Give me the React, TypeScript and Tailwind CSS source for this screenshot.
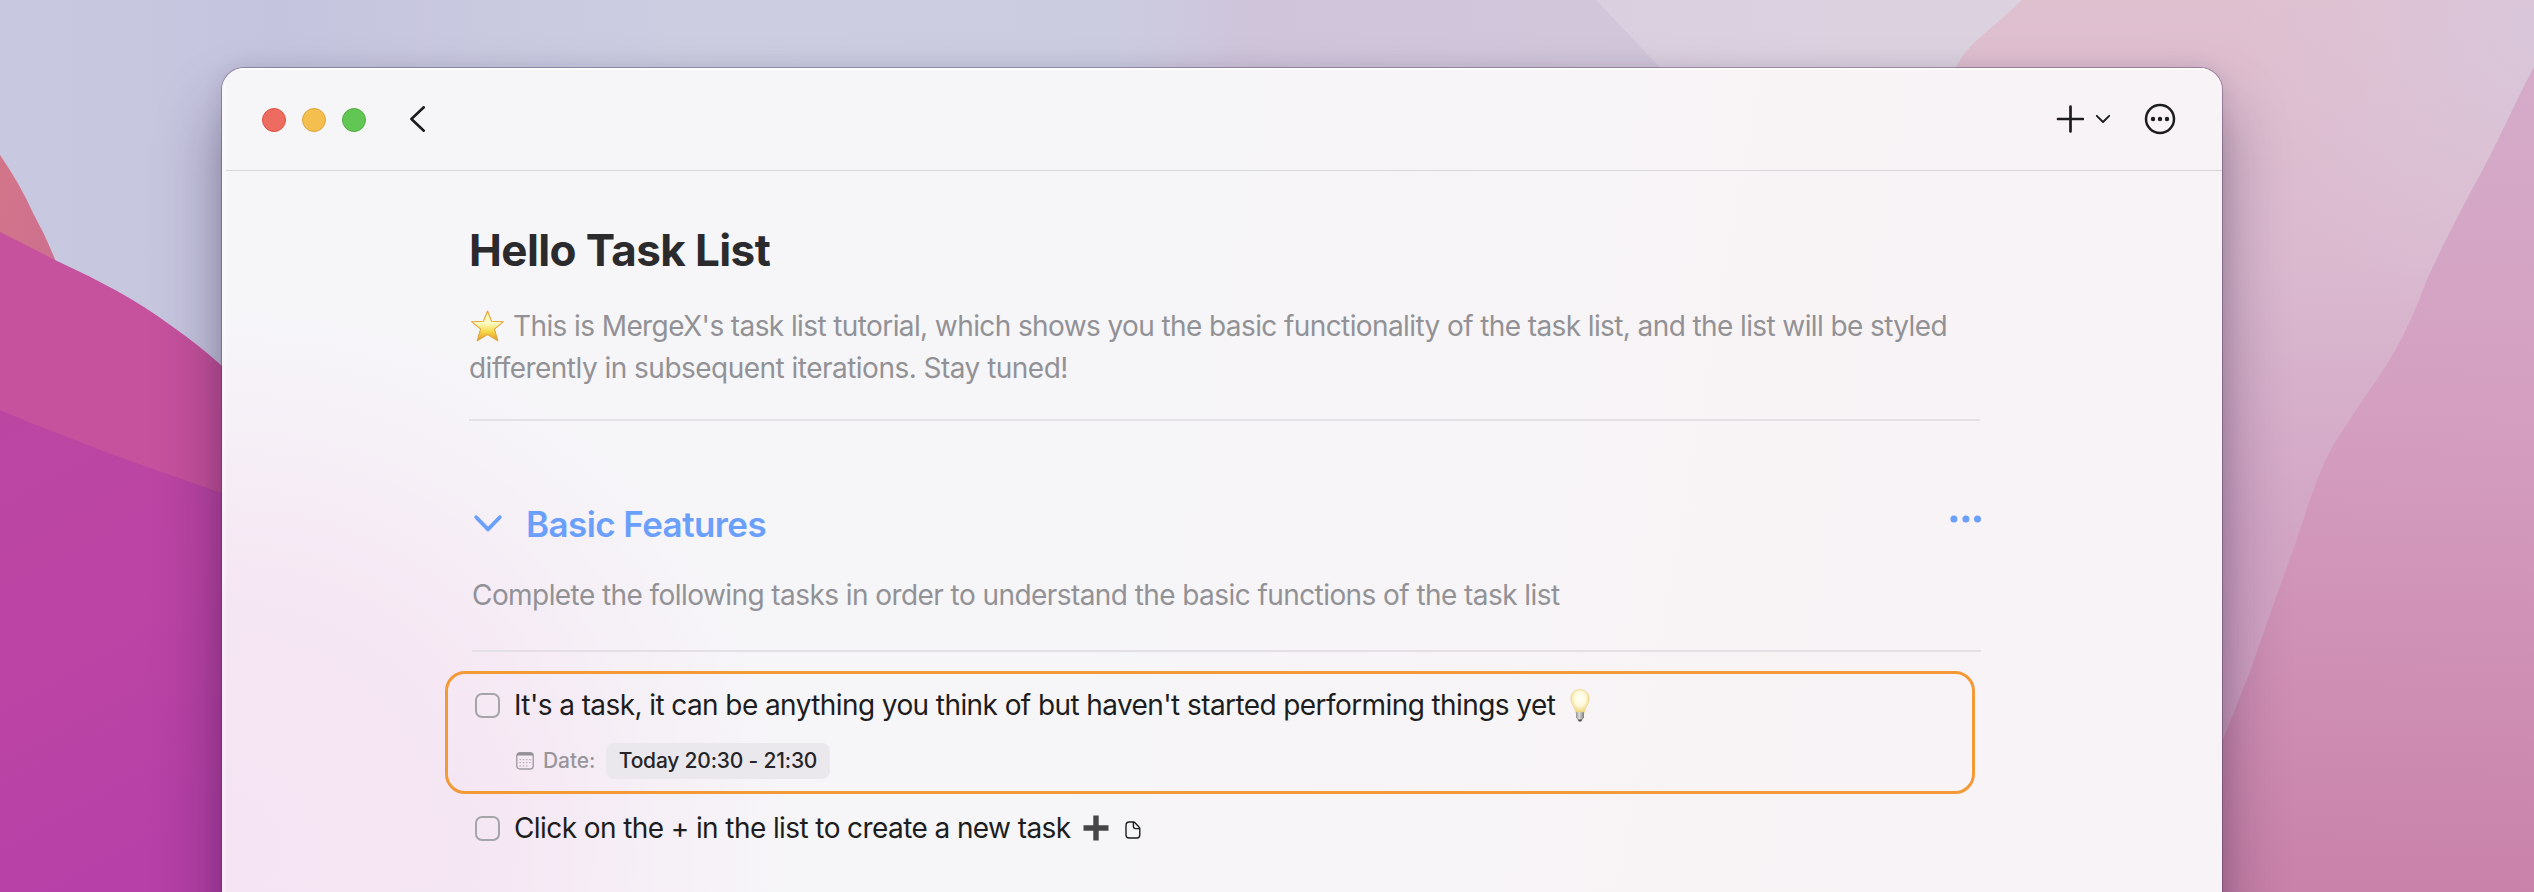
import React from "react";

function Wallpaper() {
  return (
    <svg className="absolute inset-0 h-full w-full" viewBox="0 0 2534 892" preserveAspectRatio="none" aria-hidden="true">
      <defs>
        <linearGradient id="sky" gradientUnits="userSpaceOnUse" x1="0" y1="0" x2="1960" y2="0">
          <stop offset="0" stopColor="#c8c9e1" />
          <stop offset="0.14" stopColor="#c5c4de" />
          <stop offset="0.35" stopColor="#cccde1" />
          <stop offset="0.57" stopColor="#cccce1" />
          <stop offset="0.64" stopColor="#cfc4da" />
          <stop offset="1" stopColor="#d4c8da" />
        </linearGradient>
        <linearGradient id="haze" gradientUnits="userSpaceOnUse" x1="1600" y1="0" x2="1960" y2="0">
          <stop offset="0" stopColor="#dacfdf" />
          <stop offset="1" stopColor="#dcd2df" />
        </linearGradient>
        <linearGradient id="rose" x1="0" y1="0" x2="0" y2="1">
          <stop offset="0" stopColor="#dfc0cf" />
          <stop offset="0.3" stopColor="#dab9cf" />
          <stop offset="0.6" stopColor="#d2a5c5" />
          <stop offset="1" stopColor="#cf9bbd" />
        </linearGradient>
        <radialGradient id="corner" gradientUnits="userSpaceOnUse" cx="2534" cy="30" r="300">
          <stop offset="0" stopColor="#d9c6da" />
          <stop offset="1" stopColor="#dcc6d8" stopOpacity="0" />
        </radialGradient>
        <linearGradient id="hill" gradientUnits="userSpaceOnUse" x1="2420" y1="80" x2="2400" y2="892">
          <stop offset="0" stopColor="#d5abc9" />
          <stop offset="0.4" stopColor="#d49fc1" />
          <stop offset="0.75" stopColor="#ce8eb3" />
          <stop offset="1" stopColor="#c982a9" />
        </linearGradient>
        <linearGradient id="coral" x1="0" y1="0" x2="1" y2="1">
          <stop offset="0" stopColor="#d37589" />
          <stop offset="1" stopColor="#cc6f90" />
        </linearGradient>
        <linearGradient id="purple" x1="0" y1="0" x2="0.3" y2="1">
          <stop offset="0" stopColor="#bb46a2" />
          <stop offset="0.5" stopColor="#bb44a4" />
          <stop offset="1" stopColor="#b640a7" />
        </linearGradient>
      </defs>
      <rect width="2534" height="892" fill="url(#sky)" />
      <path d="M1596 0L1672 80H2100V0Z" fill="url(#haze)" />
      <path d="M2022 0C2008 14 1990 28 1977 40Q1964 52 1954 70V892H2534V0Z" fill="url(#rose)" />
      <rect x="2220" y="0" width="314" height="400" fill="url(#corner)" />
      <path d="M2534 67C2514 104 2500 138 2482 171C2464 204 2440 250 2426 282Q2412 320 2397 347C2384 372 2364 396 2349 421Q2334 442 2325 461Q2312 492 2304 518Q2290 560 2276 597Q2262 638 2248 677L2222 742V892H2534Z" fill="url(#hill)" />
      <path d="M0 155Q20 184 33 213Q46 236 56 262V300H0Z" fill="url(#coral)" />
      <path d="M0 232Q30 247 57 261Q88 275 117 291Q146 307 173 327Q200 346 222 366L260 420V892H0Z" fill="#c6519c" />
      <path d="M0 410Q32 424 67 437Q110 454 153 469Q190 482 222 493L260 503V892H0Z" fill="url(#purple)" />
    </svg>
  );
}

function Star() {
  return (
    <svg className="h-[32px] w-[33px] shrink-0" viewBox="0 0 33 32">
      <defs>
        <linearGradient id="star" x1="0" y1="0" x2="0" y2="1">
          <stop offset="0" stopColor="#fbeea0" />
          <stop offset="0.4" stopColor="#fffcc8" />
          <stop offset="0.68" stopColor="#f8dc4c" />
          <stop offset="1" stopColor="#e39426" />
        </linearGradient>
      </defs>
      <path d="M16.5 1L20.6 11.2L32.4 11.7L23.4 19.2L26.9 30.8L16.5 24.6L6.1 30.8L9.6 19.2L.6 11.7L12.4 11.2Z" fill="url(#star)" stroke="#e0a63e" strokeWidth="1.1" strokeLinejoin="round" />
    </svg>
  );
}

function Bulb() {
  return (
    <svg className="h-[33px] w-[20px] shrink-0" viewBox="0 0 20 33">
      <defs>
        <radialGradient id="glow" cx="0.5" cy="0.4" r="0.6">
          <stop offset="0" stopColor="#fffffb" />
          <stop offset="0.5" stopColor="#fffbdc" />
          <stop offset="1" stopColor="#efd27c" />
        </radialGradient>
        <linearGradient id="base" x1="0" y1="0" x2="1" y2="0">
          <stop offset="0" stopColor="#8d8d8b" />
          <stop offset="0.4" stopColor="#dddddb" />
          <stop offset="1" stopColor="#7b7b79" />
        </linearGradient>
      </defs>
      <path d="M10 .6C4.6 .6.9 4.6.9 9.8C.9 14.8 5 18 5.7 23.4H14.3C15 18 19.1 14.8 19.1 9.8C19.1 4.6 15.4.6 10 .6Z" fill="url(#glow)" stroke="#ecd591" strokeWidth=".8" />
      <path d="M6 23.2H14V28.4L12.2 31H7.8L6 28.4Z" fill="url(#base)" />
      <path d="M7.8 30.6H12.2L11.2 32.6H8.8Z" fill="#4a4a4a" />
    </svg>
  );
}

function Checkbox() {
  return <span className="h-[25px] w-[25px] shrink-0 rounded-[7px] border-2 border-[#a3a5a9]" />;
}

export default function App() {
  return (
    <div className="relative h-[892px] w-full overflow-hidden pl-[222px] pt-[68px] font-['Inter','Liberation_Sans',sans-serif]">
      <Wallpaper />
      <main className="relative h-[900px] w-[2000px] overflow-hidden rounded-[22px] bg-[radial-gradient(ellipse_560px_540px_at_0px_780px,#f5e5f4_0%,#f5e6f3_45%,rgba(246,232,242,0)_100%),linear-gradient(100deg,#f6f6f9_0%,#f6f5f8_45%,#f8f4f6_75%,#f8f3f6_100%)] shadow-[0_0_0_1px_rgba(70,50,90,0.38),0_40px_64px_rgba(30,15,50,0.4),0_0_20px_rgba(40,30,60,0.10)]">
        <div className="absolute inset-y-0 left-0 w-[4px] bg-white/30" />
        <div className="absolute inset-x-[12px] top-0 h-[2px] bg-white/80" />
        <header className="ml-[4px] flex h-[103px] items-center border-b border-[#d6d5d9] pl-[36px] pr-[46px]">
          <div className="flex gap-4 pt-[2px]">
            <span className="h-6 w-6 rounded-full border border-[#dc5349] bg-[#ed6b5f]" />
            <span className="h-6 w-6 rounded-full border border-[#dba53b] bg-[#f5bf4f]" />
            <span className="h-6 w-6 rounded-full border border-[#52ae3f] bg-[#62c655]" />
          </div>
          <svg className="ml-[42px] h-[28px] w-[18px]" viewBox="0 0 18 28" fill="none" stroke="#1d1d20" strokeWidth="2.6" strokeLinecap="round" strokeLinejoin="round">
            <path d="M15.8 2.3L3.4 14L15.8 25.7" />
          </svg>
          <div className="ml-auto flex items-center">
            <svg className="h-[28px] w-[28px]" viewBox="0 0 28 28" fill="none" stroke="#1d1d20" strokeWidth="2.7" strokeLinecap="round">
              <path d="M14.5 1.6V26.4M2 14H27" />
            </svg>
            <svg className="ml-[11px] h-[10px] w-[16px]" viewBox="0 0 16 10" fill="none" stroke="#1d1d20" strokeWidth="1.9" strokeLinecap="round" strokeLinejoin="round">
              <path d="M1.8 1.8L8 8L14.2 1.8" />
            </svg>
            <svg className="ml-[33px] h-[32px] w-[32px]" viewBox="0 0 32 32">
              <circle cx="16" cy="16" r="14" fill="none" stroke="#1d1d20" strokeWidth="2.5" />
              <circle cx="9" cy="16" r="2.2" fill="#1d1d20" />
              <circle cx="16" cy="16" r="2.2" fill="#1d1d20" />
              <circle cx="23" cy="16" r="2.2" fill="#1d1d20" />
            </svg>
          </div>
        </header>

        <div className="pl-[247px]">
          <h1 className="mt-[49px] text-[44px] font-bold leading-[60px] tracking-[-0.6px] text-[#2b2b2e]">Hello Task List</h1>
          <div className="mt-[25px] w-[1511px] border-b-2 border-[#e3e1e5] pb-[30px] text-[28px] leading-[42px] text-[#929296]">
            <p className="flex items-center whitespace-nowrap pl-[2px]">
              <Star />
              <span className="ml-[9px] tracking-[-0.6px]">This is MergeX's task list tutorial, which shows you the basic functionality of the task list, and the list will be styled</span>
            </p>
            <p className="whitespace-nowrap tracking-[-0.52px]">differently in subsequent iterations. Stay tuned!</p>
          </div>

          <section className="ml-[3px] w-[1509px]">
            <div className="mt-[79px] flex h-[48px] items-center text-[#6b9ffc]">
              <svg className="h-[20px] w-[32px]" viewBox="0 0 32 20" fill="none" stroke="currentColor" strokeWidth="3.8" strokeLinecap="round" strokeLinejoin="round">
                <path d="M4.2 3.2L16 15.4L27.8 3.2" />
              </svg>
              <h2 className="ml-[22px] text-[35px] font-semibold leading-[48px] tracking-[-0.58px]">Basic Features</h2>
              <svg className="mb-[11px] ml-auto h-[8px] w-[32px]" viewBox="0 0 32 8" fill="currentColor">
                <circle cx="4.9" cy="4" r="3.5" />
                <circle cx="16.9" cy="4" r="3.5" />
                <circle cx="28.5" cy="4" r="3.5" />
              </svg>
            </div>
            <p className="border-b-2 border-[#e3dfe5] pb-[34px] pt-[26px] text-[28px] leading-[42px] tracking-[-0.57px] text-[#929296]">Complete the following tasks in order to understand the basic functions of the task list</p>
          </section>

          <section className="ml-[-24px] mt-[19px] h-[123px] w-[1530px] rounded-[20px] border-[3px] border-[#f29a38] pl-[27px]">
            <div className="mt-[15px] flex h-[32px] items-center">
              <Checkbox />
              <p className="ml-[14px] whitespace-nowrap text-[28px] leading-[32px] tracking-[-0.585px] text-[#1d1d20]">It's a task, it can be anything you think of but haven't started performing things yet</p>
              <div className="ml-[15px]"><Bulb /></div>
            </div>
            <div className="mt-[22px] flex h-[36px] items-center">
              <svg className="ml-[41px] h-[18px] w-[18px]" viewBox="0 0 18 18">
                <rect x=".8" y=".8" width="16.4" height="16.2" rx="3" fill="none" stroke="#a09da2" strokeWidth="1.4" />
                <path d="M.8 3.5Q.8.8 3.6.8H14.4Q17.2.8 17.2 3.5Z" fill="#929094" />
                <path d="M3.5 7.6H15M3.5 10.7H15M3.5 13.8H12" stroke="#b5b0b6" strokeWidth="1.3" strokeDasharray="1.5 1.7" />
              </svg>
              <span className="ml-[9px] w-[54px] whitespace-nowrap text-[21px] font-medium tracking-[-0.1px] text-[#98969b]">Date:</span>
              <span className="ml-[9px] flex h-[36px] w-[224px] items-center justify-center whitespace-nowrap rounded-[8px] bg-[#ebe8ed] text-[21px] font-medium tracking-[-0.2px] text-[#252528]">Today 20:30 - 21:30</span>
            </div>
          </section>

          <div className="ml-[6px] mt-[18px] flex h-[32px] items-center">
            <Checkbox />
            <p className="ml-[14px] whitespace-nowrap text-[28px] leading-[32px] tracking-[-0.59px] text-[#1d1d20]">Click on the + in the list to create a new task</p>
            <svg className="ml-[13px] h-[26px] w-[26px]" viewBox="0 0 26 26">
              <path d="M10.3 .5H15.7V10.3H25.5V15.7H15.7V25.5H10.3V15.7H.5V10.3H10.3Z" fill="#464648" />
            </svg>
            <svg className="ml-[16px] mt-[4px] h-[18px] w-[16px]" viewBox="0 0 16 18" fill="none" stroke="#1d1d20" strokeWidth="1.4" strokeLinejoin="round">
              <path d="M4.2 1H8.4Q9.2 1 9.8 1.6L14.2 6.2Q14.8 6.8 14.8 7.6V13.8Q14.8 17 11.8 17H4.2Q1 17 1 13.8V4.2Q1 1 4.2 1Z" />
              <path d="M8.4 1V5.3Q8.4 7.6 10.6 7.6H14.8" />
            </svg>
          </div>
        </div>
      </main>
    </div>
  );
}
